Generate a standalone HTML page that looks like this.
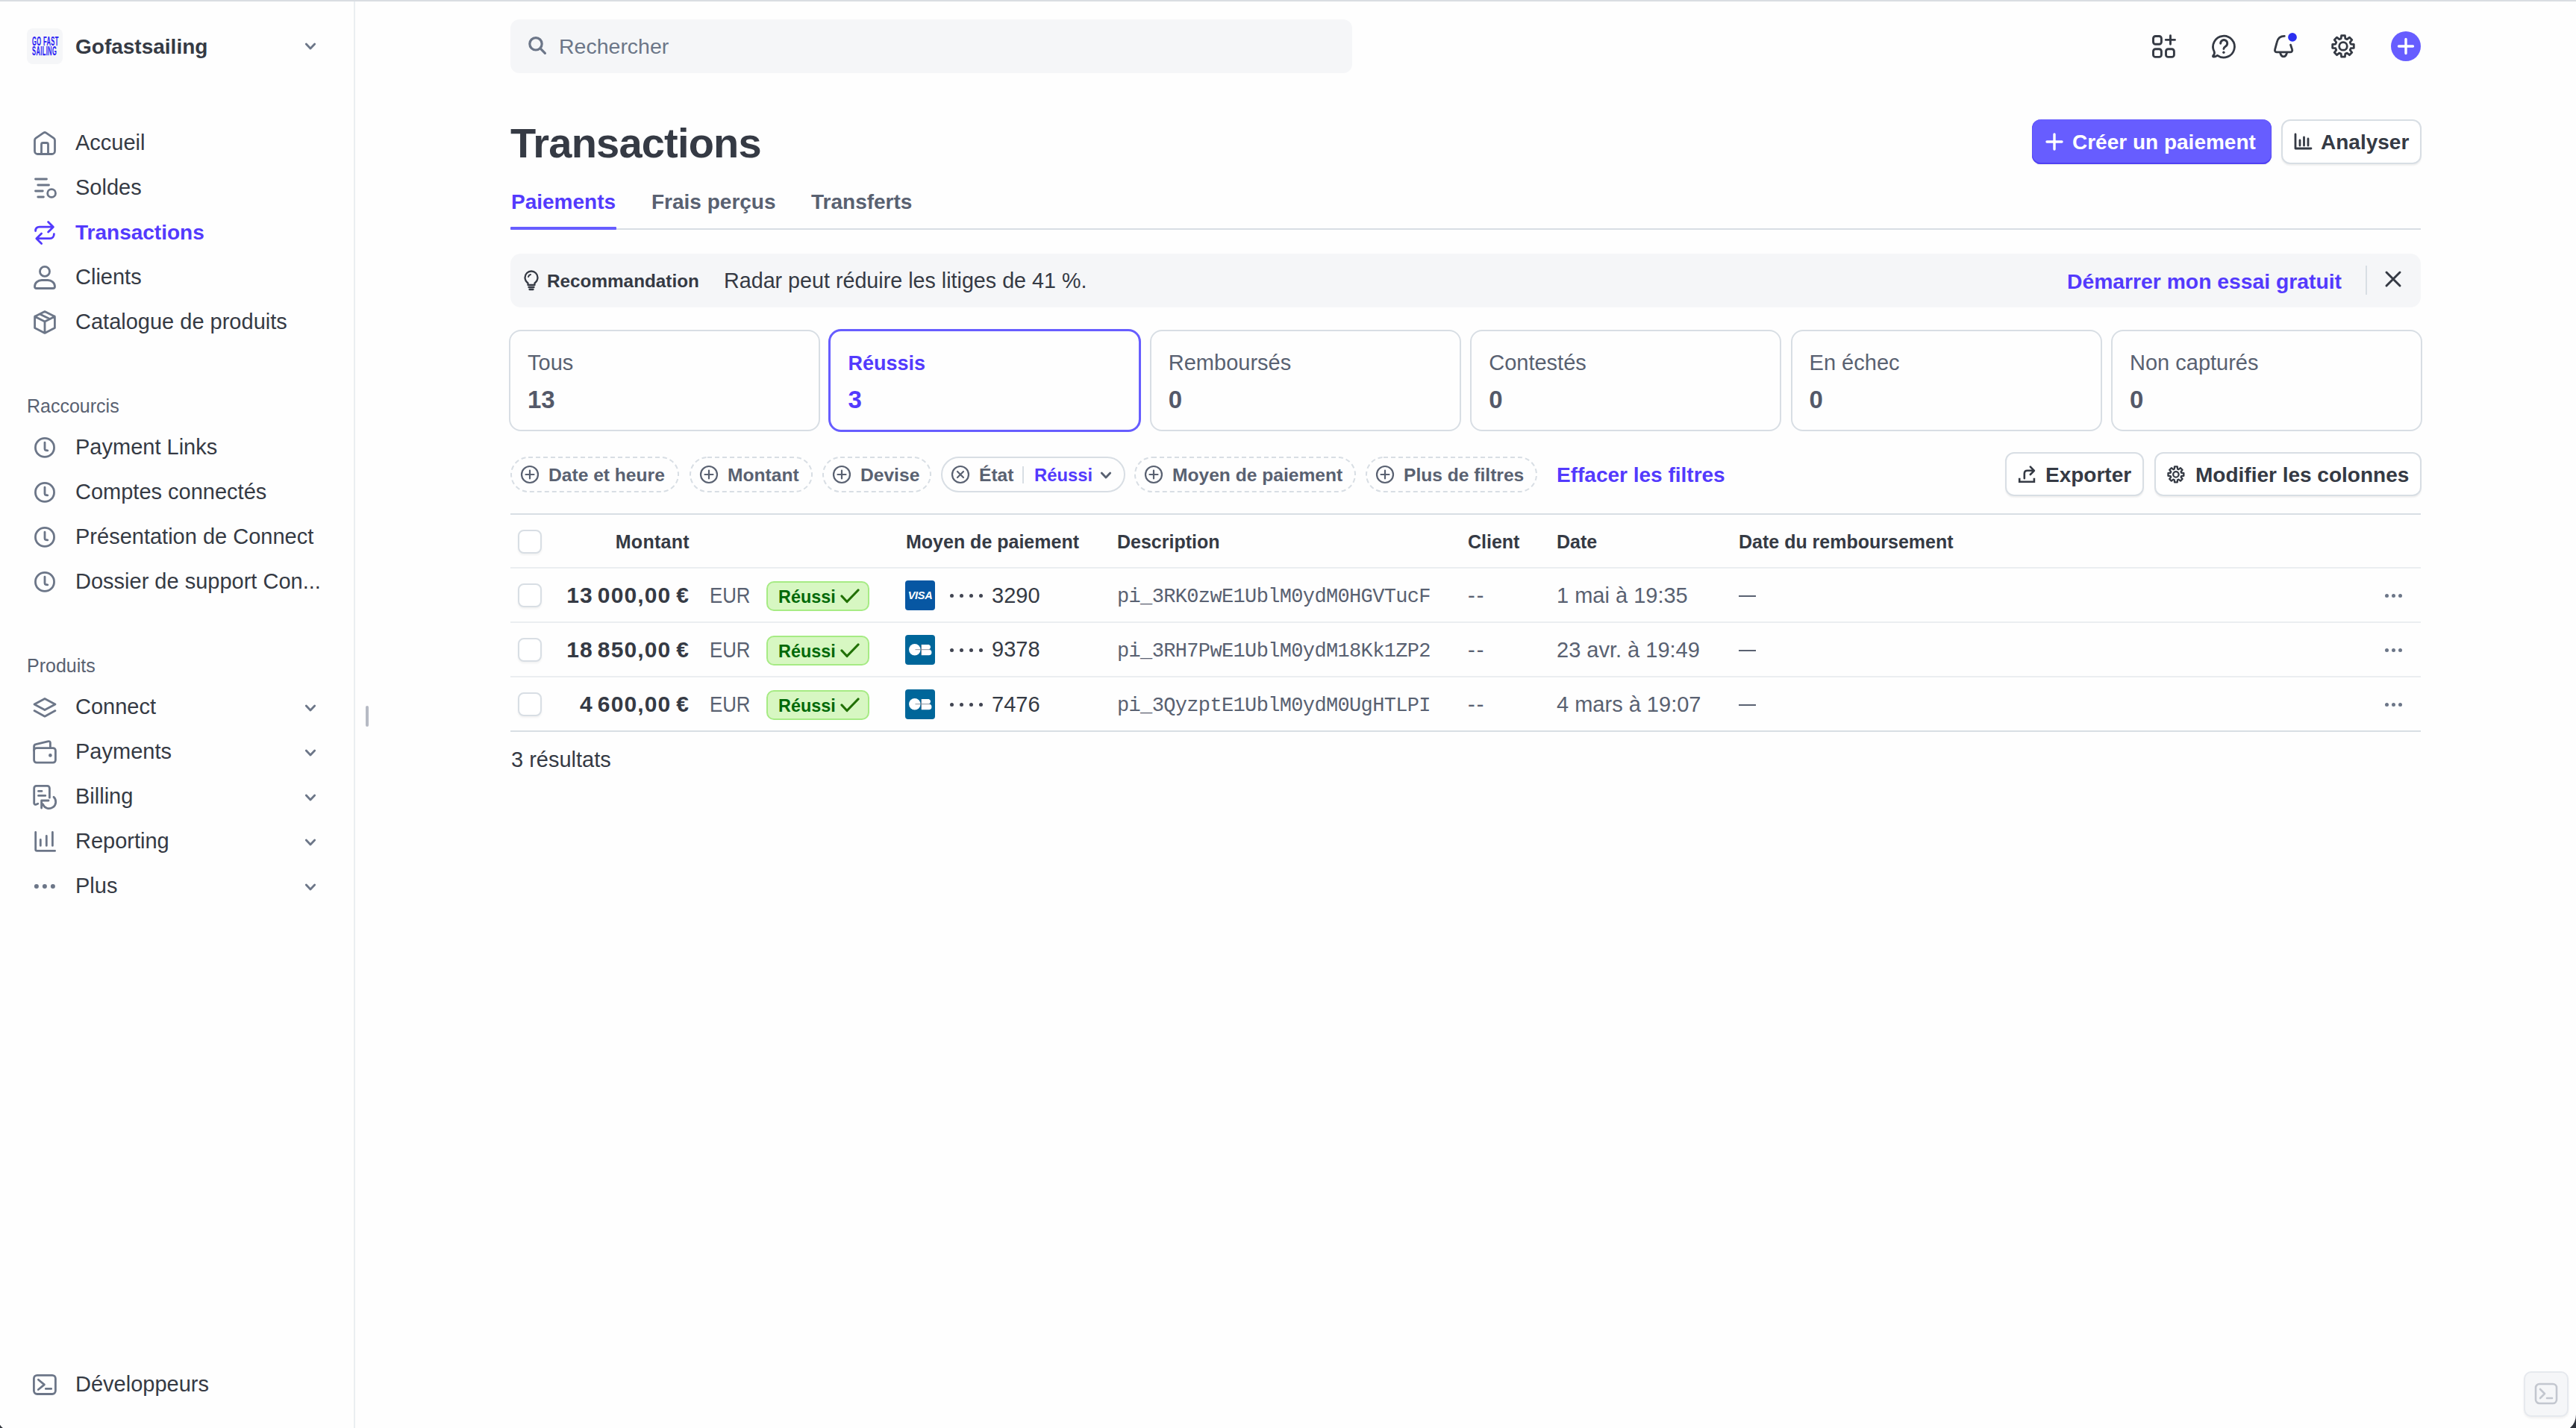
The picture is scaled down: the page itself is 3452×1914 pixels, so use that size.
<!DOCTYPE html>
<html><head><meta charset="utf-8"><title>Transactions</title>
<style>
html,body{margin:0;padding:0;}
body{width:3452px;height:1914px;position:relative;overflow:hidden;background:#fefefe;font-family:'Liberation Sans', sans-serif;-webkit-font-smoothing:antialiased;}
</style></head><body>
<div style="position:absolute;left:0px;top:0px;width:3452px;height:2px;background:#d9dde2;"></div>
<div style="position:absolute;left:474px;top:2px;width:2px;height:1912px;background:#ebeef1;"></div>
<div style="position:absolute;left:490px;top:946px;width:4px;height:28px;background:#b6bac4;border-radius:2px;"></div>
<div style="position:absolute;left:36px;top:38px;width:48px;height:48px;background:#f5f6f8;border-radius:8px;"></div>
<div style="position:absolute;left:43px;top:49.8px;font-family:'Liberation Sans', sans-serif;font-weight:700;font-size:16px;line-height:12.8px;color:#2a1ff5;transform:scaleX(0.47);transform-origin:0 0;white-space:nowrap;letter-spacing:0.8px;-webkit-text-stroke:0.25px #2a1ff5">GO FAST<br>SAILING</div>
<div style="position:absolute;top:49.00px;font-family:'Liberation Sans', sans-serif;font-size:28px;line-height:28px;font-weight:700;color:#353a44;white-space:nowrap;left:101px;">Gofastsailing</div>
<svg style="position:absolute;left:404.2px;top:52.4px" width="24" height="20" viewBox="404.2 52.4 24 20" fill="none"><path d="M410.5 59.449999999999996 L416.2 65.35 L421.9 59.449999999999996" stroke="#6c7688" stroke-width="2.8" stroke-linecap="round" stroke-linejoin="round"/></svg>
<svg style="position:absolute;left:40px;top:170px" width="40" height="42" viewBox="40 170 40 42" fill="none"><path d="M46.5 188 Q46.5 186.3 48 185.2 L58.2 178.1 Q60 176.9 61.8 178.1 L72 185.2 Q73.5 186.3 73.5 188 V202.5 A4 4 0 0 1 69.5 206.5 H50.5 A4 4 0 0 1 46.5 202.5 Z" stroke="#6c7688" stroke-width="2.8" stroke-linecap="round" stroke-linejoin="round"/><path d="M55.5 206.5 V193.5 A2 2 0 0 1 57.5 191.5 H62.5 A2 2 0 0 1 64.5 193.5 V206.5" stroke="#6c7688" stroke-width="2.8" stroke-linecap="round" stroke-linejoin="round"/></svg>
<svg style="position:absolute;left:40px;top:232px" width="40" height="40" viewBox="40 232 40 40" fill="none"><path d="M47.5 240 H62.5 M50.8 248 H65.5 M47.5 256 H57.3 M50.8 264 H58.4" stroke="#6c7688" stroke-width="2.8" stroke-linecap="round" stroke-linejoin="round"/><circle cx="69.1" cy="259" r="5.4" stroke="#6c7688" stroke-width="2.8"/></svg>
<svg style="position:absolute;left:40px;top:292px" width="40" height="40" viewBox="40 292 40 40" fill="none"><path d="M47.6 309.6 C47.6 306.2 49.6 304.2 53 304.2 H71 M64.6 297.4 L71.4 304.2 L64.6 311" stroke="#533afd" stroke-width="2.8" stroke-linecap="round" stroke-linejoin="round"/><path d="M72.4 313.6 C72.4 317 70.4 319.7 67 319.7 H49 M55.6 313 L48.8 319.7 L55.6 326.4" stroke="#533afd" stroke-width="2.8" stroke-linecap="round" stroke-linejoin="round"/></svg>
<svg style="position:absolute;left:40px;top:352px" width="40" height="40" viewBox="40 352 40 40" fill="none"><circle cx="60" cy="363.9" r="6.5" stroke="#6c7688" stroke-width="2.8"/><path d="M46.5 384 C46.5 379 51 375.5 56 375.5 H64 C69 375.5 73.5 379 73.5 384 A2.5 2.5 0 0 1 71 386.5 H49 A2.5 2.5 0 0 1 46.5 384 Z" stroke="#6c7688" stroke-width="2.8" stroke-linecap="round" stroke-linejoin="round"/></svg>
<svg style="position:absolute;left:40px;top:412px" width="40" height="40" viewBox="40 412 40 40" fill="none"><path d="M60 417.6 L73.4 424.2 V439.6 L60 446.4 L46.6 439.6 V424.2 Z M46.6 424.2 L60 431 L73.4 424.2 M60 431 V446.4 M53.3 420.9 L66.7 427.6" stroke="#6c7688" stroke-width="2.8" stroke-linecap="round" stroke-linejoin="round"/></svg>
<div style="position:absolute;top:177.00px;font-family:'Liberation Sans', sans-serif;font-size:29px;line-height:29px;font-weight:400;color:#353a44;white-space:nowrap;left:101px;">Accueil</div>
<div style="position:absolute;top:237.00px;font-family:'Liberation Sans', sans-serif;font-size:29px;line-height:29px;font-weight:400;color:#353a44;white-space:nowrap;left:101px;">Soldes</div>
<div style="position:absolute;top:298.00px;font-family:'Liberation Sans', sans-serif;font-size:28px;line-height:28px;font-weight:700;color:#533afd;white-space:nowrap;left:101px;">Transactions</div>
<div style="position:absolute;top:357.00px;font-family:'Liberation Sans', sans-serif;font-size:29px;line-height:29px;font-weight:400;color:#353a44;white-space:nowrap;left:101px;">Clients</div>
<div style="position:absolute;top:417.00px;font-family:'Liberation Sans', sans-serif;font-size:29px;line-height:29px;font-weight:400;color:#353a44;white-space:nowrap;left:101px;">Catalogue de produits</div>
<div style="position:absolute;top:532.00px;font-family:'Liberation Sans', sans-serif;font-size:25px;line-height:25px;font-weight:400;color:#596171;white-space:nowrap;left:36px;">Raccourcis</div>
<div style="position:absolute;top:585.00px;font-family:'Liberation Sans', sans-serif;font-size:29px;line-height:29px;font-weight:400;color:#353a44;white-space:nowrap;left:101px;">Payment Links</div>
<svg style="position:absolute;left:40px;top:579px" width="40" height="40" viewBox="40 579 40 40" fill="none"><circle cx="60" cy="599.9" r="12.55" stroke="#6c7688" stroke-width="2.8"/><path d="M60 593.1 V601.6999999999999 Q60 603.1 61.3 603.5 L63.8 603.8" stroke="#6c7688" stroke-width="2.8" stroke-linecap="round" stroke-linejoin="round"/></svg>
<div style="position:absolute;top:645.00px;font-family:'Liberation Sans', sans-serif;font-size:29px;line-height:29px;font-weight:400;color:#353a44;white-space:nowrap;left:101px;">Comptes connectés</div>
<svg style="position:absolute;left:40px;top:639px" width="40" height="40" viewBox="40 639 40 40" fill="none"><circle cx="60" cy="659.9" r="12.55" stroke="#6c7688" stroke-width="2.8"/><path d="M60 653.1 V661.6999999999999 Q60 663.1 61.3 663.5 L63.8 663.8" stroke="#6c7688" stroke-width="2.8" stroke-linecap="round" stroke-linejoin="round"/></svg>
<div style="position:absolute;top:705.00px;font-family:'Liberation Sans', sans-serif;font-size:29px;line-height:29px;font-weight:400;color:#353a44;white-space:nowrap;left:101px;">Présentation de Connect</div>
<svg style="position:absolute;left:40px;top:699px" width="40" height="40" viewBox="40 699 40 40" fill="none"><circle cx="60" cy="719.9" r="12.55" stroke="#6c7688" stroke-width="2.8"/><path d="M60 713.1 V721.6999999999999 Q60 723.1 61.3 723.5 L63.8 723.8" stroke="#6c7688" stroke-width="2.8" stroke-linecap="round" stroke-linejoin="round"/></svg>
<div style="position:absolute;top:765.00px;font-family:'Liberation Sans', sans-serif;font-size:29px;line-height:29px;font-weight:400;color:#353a44;white-space:nowrap;left:101px;">Dossier de support Con...</div>
<svg style="position:absolute;left:40px;top:759px" width="40" height="40" viewBox="40 759 40 40" fill="none"><circle cx="60" cy="779.9" r="12.55" stroke="#6c7688" stroke-width="2.8"/><path d="M60 773.1 V781.6999999999999 Q60 783.1 61.3 783.5 L63.8 783.8" stroke="#6c7688" stroke-width="2.8" stroke-linecap="round" stroke-linejoin="round"/></svg>
<div style="position:absolute;top:880.00px;font-family:'Liberation Sans', sans-serif;font-size:25px;line-height:25px;font-weight:400;color:#596171;white-space:nowrap;left:36px;">Produits</div>
<div style="position:absolute;top:933.00px;font-family:'Liberation Sans', sans-serif;font-size:29px;line-height:29px;font-weight:400;color:#353a44;white-space:nowrap;left:101px;">Connect</div>
<svg style="position:absolute;left:404.2px;top:938.7px" width="24" height="20" viewBox="404.2 938.7 24 20" fill="none"><path d="M410.5 945.75 L416.2 951.6500000000001 L421.9 945.75" stroke="#6c7688" stroke-width="2.8" stroke-linecap="round" stroke-linejoin="round"/></svg>
<div style="position:absolute;top:993.00px;font-family:'Liberation Sans', sans-serif;font-size:29px;line-height:29px;font-weight:400;color:#353a44;white-space:nowrap;left:101px;">Payments</div>
<svg style="position:absolute;left:404.2px;top:998.7px" width="24" height="20" viewBox="404.2 998.7 24 20" fill="none"><path d="M410.5 1005.75 L416.2 1011.6500000000001 L421.9 1005.75" stroke="#6c7688" stroke-width="2.8" stroke-linecap="round" stroke-linejoin="round"/></svg>
<div style="position:absolute;top:1053.00px;font-family:'Liberation Sans', sans-serif;font-size:29px;line-height:29px;font-weight:400;color:#353a44;white-space:nowrap;left:101px;">Billing</div>
<svg style="position:absolute;left:404.2px;top:1058.7px" width="24" height="20" viewBox="404.2 1058.7 24 20" fill="none"><path d="M410.5 1065.75 L416.2 1071.65 L421.9 1065.75" stroke="#6c7688" stroke-width="2.8" stroke-linecap="round" stroke-linejoin="round"/></svg>
<div style="position:absolute;top:1113.00px;font-family:'Liberation Sans', sans-serif;font-size:29px;line-height:29px;font-weight:400;color:#353a44;white-space:nowrap;left:101px;">Reporting</div>
<svg style="position:absolute;left:404.2px;top:1118.7px" width="24" height="20" viewBox="404.2 1118.7 24 20" fill="none"><path d="M410.5 1125.75 L416.2 1131.65 L421.9 1125.75" stroke="#6c7688" stroke-width="2.8" stroke-linecap="round" stroke-linejoin="round"/></svg>
<div style="position:absolute;top:1173.00px;font-family:'Liberation Sans', sans-serif;font-size:29px;line-height:29px;font-weight:400;color:#353a44;white-space:nowrap;left:101px;">Plus</div>
<svg style="position:absolute;left:404.2px;top:1178.7px" width="24" height="20" viewBox="404.2 1178.7 24 20" fill="none"><path d="M410.5 1185.75 L416.2 1191.65 L421.9 1185.75" stroke="#6c7688" stroke-width="2.8" stroke-linecap="round" stroke-linejoin="round"/></svg>
<svg style="position:absolute;left:40px;top:928px" width="40" height="40" viewBox="40 928 40 40" fill="none"><path d="M60 936.5 L74 944 L60 951.5 L46 944 Z M46 952.6 L60 960.2 L74 952.6" stroke="#6c7688" stroke-width="2.8" stroke-linecap="round" stroke-linejoin="round"/></svg>
<svg style="position:absolute;left:40px;top:988px" width="40" height="40" viewBox="40 988 40 40" fill="none"><path d="M45.6 1006 V1000.6 A3 3 0 0 1 48 997.7 L64.8 993.7 A2 2 0 0 1 67.4 995.6 V1002.6" stroke="#6c7688" stroke-width="2.8" stroke-linecap="round" stroke-linejoin="round"/><path d="M49 1002.6 H71 A3.4 3.4 0 0 1 74.4 1006 V1018.8 A3.4 3.4 0 0 1 71 1022.2 H49 A3.4 3.4 0 0 1 45.6 1018.8 V1006 A3.4 3.4 0 0 1 49 1002.6 Z" stroke="#6c7688" stroke-width="2.8" stroke-linecap="round" stroke-linejoin="round"/><circle cx="67.4" cy="1012.4" r="2.3" fill="#6c7688"/></svg>
<svg style="position:absolute;left:40px;top:1048px" width="40" height="40" viewBox="40 1048 40 40" fill="none"><path d="M66.4 1069.2 V1056.4 A3 3 0 0 0 63.4 1053.4 H48.7 A3 3 0 0 0 45.7 1056.4 V1076.4 A2 2 0 0 0 48.4 1078.3 L50.8 1077.3" stroke="#6c7688" stroke-width="2.8" stroke-linecap="round" stroke-linejoin="round"/><path d="M51.5 1060.4 H56 M51.5 1066.4 H60.8" stroke="#6c7688" stroke-width="2.8" stroke-linecap="round" stroke-linejoin="round"/><path d="M72 1068.2 A9 9 0 1 1 57.3 1077.8" stroke="#6c7688" stroke-width="2.8" stroke-linecap="round" stroke-linejoin="round"/><path d="M65 1073 H55.6 V1083" stroke="#6c7688" stroke-width="2.8" stroke-linecap="round" stroke-linejoin="round"/></svg>
<svg style="position:absolute;left:40px;top:1108px" width="40" height="40" viewBox="40 1108 40 40" fill="none"><path d="M47.7 1115.4 V1138.6 A1.8 1.8 0 0 0 49.5 1140.4 H73.6 M54.3 1125.4 V1133.4 M62.3 1120.4 V1133.4 M70.4 1115.4 V1133.4" stroke="#6c7688" stroke-width="2.8" stroke-linecap="round" stroke-linejoin="round"/></svg>
<svg style="position:absolute;left:40px;top:1178px" width="40" height="20" viewBox="40 1178 40 20" fill="none"><circle cx="48.9" cy="1188" r="3" fill="#6c7688"/><circle cx="59.9" cy="1188" r="3" fill="#6c7688"/><circle cx="70.9" cy="1188" r="3" fill="#6c7688"/></svg>
<div style="position:absolute;top:1841.00px;font-family:'Liberation Sans', sans-serif;font-size:29px;line-height:29px;font-weight:400;color:#353a44;white-space:nowrap;left:101px;">Développeurs</div>
<svg style="position:absolute;left:40px;top:1836px" width="40" height="40" viewBox="40 1836 40 40" fill="none"><path d="M49.8 1843.3 H70 A4.4 4.4 0 0 1 74.4 1847.7 V1864.1 A4.4 4.4 0 0 1 70 1868.5 H49.8 A4.4 4.4 0 0 1 45.4 1864.1 V1847.7 A4.4 4.4 0 0 1 49.8 1843.3 Z" stroke="#6c7688" stroke-width="2.8" stroke-linecap="round" stroke-linejoin="round"/><path d="M51.4 1849.2 L59.4 1855.9 L51.3 1862.5 M61.3 1861.4 H68.7" stroke="#6c7688" stroke-width="2.8" stroke-linecap="round" stroke-linejoin="round"/></svg>
<div style="position:absolute;left:684px;top:26px;width:1128px;height:72px;background:#f5f6f8;border-radius:12px;"></div>
<svg style="position:absolute;left:700px;top:40px" width="40" height="40" viewBox="700 40 40 40" fill="none"><circle cx="718" cy="58.8" r="8.2" stroke="#6c7688" stroke-width="3.2"/><path d="M724.3 65.2 L730.4 71.3" stroke="#6c7688" stroke-width="3.2" stroke-linecap="round" stroke-linejoin="round"/></svg>
<div style="position:absolute;top:48.00px;font-family:'Liberation Sans', sans-serif;font-size:28.5px;line-height:28.5px;font-weight:400;color:#6c7688;white-space:nowrap;left:749px;">Rechercher</div>
<svg style="position:absolute;left:2876px;top:38px" width="50" height="50" viewBox="2876 38 50 50" fill="none"><path d="M2888.5 48.5 H2893.4 A3 3 0 0 1 2896.4 51.5 V56.3 A3 3 0 0 1 2893.4 59.3 H2888.5 A3 3 0 0 1 2885.5 56.3 V51.5 A3 3 0 0 1 2888.5 48.5 Z" stroke="#353a44" stroke-width="2.9" stroke-linecap="round" stroke-linejoin="round"/><path d="M2888.5 65.7 H2893.4 A3 3 0 0 1 2896.4 68.7 V73.4 A3 3 0 0 1 2893.4 76.4 H2888.5 A3 3 0 0 1 2885.5 73.4 V68.7 A3 3 0 0 1 2888.5 65.7 Z" stroke="#353a44" stroke-width="2.9" stroke-linecap="round" stroke-linejoin="round"/><path d="M2905.5 65.7 H2910.4 A3 3 0 0 1 2913.4 68.7 V73.4 A3 3 0 0 1 2910.4 76.4 H2905.5 A3 3 0 0 1 2902.5 73.4 V68.7 A3 3 0 0 1 2905.5 65.7 Z" stroke="#353a44" stroke-width="2.9" stroke-linecap="round" stroke-linejoin="round"/><path d="M2908.5 47.7 V59.3 M2902.3 53.4 H2914.5" stroke="#353a44" stroke-width="2.9" stroke-linecap="round" stroke-linejoin="round"/></svg>
<svg style="position:absolute;left:2956px;top:38px" width="50" height="50" viewBox="2956 38 50 50" fill="none"><path d="M2971.6 74.3 A14.4 14.4 0 1 0 2967.2 69.2 C2967.9 71.2 2967.2 73.2 2965.6 74.8 A0.9 0.9 0 0 0 2966.4 76.2 C2968.3 76.2 2969.8 75.3 2971.6 74.3 Z" stroke="#353a44" stroke-width="2.8" stroke-linecap="round" stroke-linejoin="round"/><path d="M2975.7 58.2 A4.5 4.5 0 1 1 2982.6 61.9 C2981 62.9 2979.9 63.8 2979.9 65.6" stroke="#353a44" stroke-width="2.9" stroke-linecap="round" stroke-linejoin="round"/><circle cx="2979.9" cy="70.2" r="1.7" fill="#353a44"/></svg>
<svg style="position:absolute;left:3036px;top:38px" width="50" height="50" viewBox="3036 38 50 50" fill="none"><path d="M3061.3 48.4 C3055.6 48.4 3052.3 51.8 3051.2 56.6 L3048.6 66.4 A2.6 2.6 0 0 0 3051.1 69.9 H3069.1 A2.6 2.6 0 0 0 3071.6 66.4 L3069.6 60.2" stroke="#353a44" stroke-width="2.8" stroke-linecap="round" stroke-linejoin="round"/><path d="M3055.6 70.6 Q3056.8 75.8 3060.1 75.8 Q3063.4 75.8 3064.6 70.6" stroke="#353a44" stroke-width="2.8" stroke-linecap="round" stroke-linejoin="round"/><circle cx="3072" cy="49.9" r="5.9" fill="#2b2ff0"/></svg>
<svg style="position:absolute;left:3116px;top:38px" width="50" height="50" viewBox="3116 38 50 50" fill="none"><path d="M3137.17 51.69 L3137.61 47.60 L3142.39 47.60 L3142.83 51.69 L3145.22 52.67 L3148.42 50.10 L3151.80 53.48 L3149.23 56.68 L3150.21 59.07 L3154.30 59.51 L3154.30 64.29 L3150.21 64.73 L3149.23 67.12 L3151.80 70.32 L3148.42 73.70 L3145.22 71.13 L3142.83 72.11 L3142.39 76.20 L3137.61 76.20 L3137.17 72.11 L3134.78 71.13 L3131.58 73.70 L3128.20 70.32 L3130.77 67.12 L3129.79 64.73 L3125.70 64.29 L3125.70 59.51 L3129.79 59.07 L3130.77 56.68 L3128.20 53.48 L3131.58 50.10 L3134.78 52.67 Z" stroke="#353a44" stroke-width="2.8" stroke-linecap="round" stroke-linejoin="round"/><circle cx="3140" cy="61.9" r="5.3" stroke="#353a44" stroke-width="2.8"/></svg>
<svg style="position:absolute;left:3200px;top:38px" width="50" height="50" viewBox="3200 38 50 50" fill="none"><circle cx="3224" cy="62" r="20" fill="#675dff"/><path d="M3224 52.5 V71.5 M3214.5 62 H3233.5" stroke="#fff" stroke-width="3.4" stroke-linecap="round" stroke-linejoin="round"/></svg>
<div style="position:absolute;top:164.00px;font-family:'Liberation Sans', sans-serif;font-size:56px;line-height:56px;font-weight:700;color:#353a44;white-space:nowrap;letter-spacing:-0.8px;left:684px;">Transactions</div>
<div style="position:absolute;left:2723px;top:160px;width:321px;height:60px;background:#675dff;border-radius:12px;box-shadow:inset 0 -2px 0 #5040f2, inset 1px 0 0 #5c4ff8, inset -1px 0 0 #5c4ff8, 0 1px 2px rgba(0,0,0,0.08);"></div>
<svg style="position:absolute;left:2741px;top:178px;" width="24" height="24" viewBox="0 0 24 24" fill="none"><path d="M12 2 V22 M2 12 H22" stroke="#fff" stroke-width="3.4" stroke-linecap="round"/></svg>
<div style="position:absolute;top:177.00px;font-family:'Liberation Sans', sans-serif;font-size:28px;line-height:28px;font-weight:700;color:#ffffff;white-space:nowrap;left:2777px;">Créer un paiement</div>
<div style="position:absolute;left:3057px;top:160px;width:188px;height:60px;background:#fff;border:2px solid #d8dee4;border-radius:12px;box-sizing:border-box;box-shadow:0 2px 2px rgba(0,0,0,0.06);"></div>
<svg style="position:absolute;left:3073px;top:178px;" width="26" height="24" viewBox="0 0 26 24" fill="none"><path d="M3 2 V21 H24" stroke="#353a44" stroke-width="2.8" stroke-linecap="round" stroke-linejoin="round"/><path d="M9 10 V17 M14.5 6 V17 M20 8 V17" stroke="#353a44" stroke-width="2.8" stroke-linecap="round"/></svg>
<div style="position:absolute;top:177.00px;font-family:'Liberation Sans', sans-serif;font-size:28px;line-height:28px;font-weight:700;color:#353a44;white-space:nowrap;left:3110px;">Analyser</div>
<div style="position:absolute;left:684px;top:306px;width:2560px;height:2px;background:#d8dee4;"></div>
<div style="position:absolute;top:257.00px;font-family:'Liberation Sans', sans-serif;font-size:28px;line-height:28px;font-weight:700;color:#533afd;white-space:nowrap;left:685px;">Paiements</div>
<div style="position:absolute;left:684px;top:304px;width:142px;height:4px;background:#675dff;border-radius:1px;"></div>
<div style="position:absolute;top:257.00px;font-family:'Liberation Sans', sans-serif;font-size:28px;line-height:28px;font-weight:700;color:#596171;white-space:nowrap;left:873px;">Frais perçus</div>
<div style="position:absolute;top:257.00px;font-family:'Liberation Sans', sans-serif;font-size:28px;line-height:28px;font-weight:700;color:#596171;white-space:nowrap;left:1087px;">Transferts</div>
<div style="position:absolute;left:684px;top:340px;width:2560px;height:72px;background:#f5f6f8;border-radius:14px;"></div>
<svg style="position:absolute;left:700px;top:362px;" width="24" height="28" viewBox="0 0 24 28" fill="none"><path d="M7.5 17.5 C5 15.5 3.5 13 3.5 10 A8.5 8.5 0 0 1 20.5 10 C20.5 13 19 15.5 16.5 17.5 V20 H7.5 Z" stroke="#353a44" stroke-width="2.3" stroke-linejoin="round"/><path d="M8.5 23 H15.5 M9.5 26 H14.5" stroke="#353a44" stroke-width="2.3" stroke-linecap="round"/><path d="M8 9 A4 4 0 0 1 11 6" stroke="#353a44" stroke-width="2" stroke-linecap="round"/></svg>
<div style="position:absolute;top:365.00px;font-family:'Liberation Sans', sans-serif;font-size:24.3px;line-height:24.3px;font-weight:700;color:#353a44;white-space:nowrap;left:733px;">Recommandation</div>
<div style="position:absolute;top:362.00px;font-family:'Liberation Sans', sans-serif;font-size:28.7px;line-height:28.7px;font-weight:400;color:#353a44;white-space:nowrap;left:970px;">Radar peut réduire les litiges de 41 %.</div>
<div style="position:absolute;top:363.00px;font-family:'Liberation Sans', sans-serif;font-size:28.3px;line-height:28.3px;font-weight:700;color:#533afd;white-space:nowrap;left:2770px;">Démarrer mon essai gratuit</div>
<div style="position:absolute;left:3170px;top:356px;width:2px;height:39px;background:#d8dee4;"></div>
<svg style="position:absolute;left:3195px;top:362px;" width="24" height="24" viewBox="0 0 24 24" fill="none"><path d="M3 3 L21 21 M21 3 L3 21" stroke="#353a44" stroke-width="3" stroke-linecap="round"/></svg>
<div style="position:absolute;left:682.0px;top:442px;width:417px;height:136px;border:2px solid #d8dee4;border-radius:16px;box-sizing:border-box;"></div>
<div style="position:absolute;top:472.00px;font-family:'Liberation Sans', sans-serif;font-size:29px;line-height:29px;font-weight:400;color:#596171;white-space:nowrap;left:707.0px;">Tous</div>
<div style="position:absolute;top:519.00px;font-family:'Liberation Sans', sans-serif;font-size:33px;line-height:33px;font-weight:700;color:#545969;white-space:nowrap;left:707.0px;">13</div>
<div style="position:absolute;left:1110.4px;top:441px;width:419px;height:138px;border:3px solid #675dff;border-radius:17px;box-sizing:border-box;"></div>
<div style="position:absolute;top:474.00px;font-family:'Liberation Sans', sans-serif;font-size:27px;line-height:27px;font-weight:700;color:#533afd;white-space:nowrap;left:1136.4px;">Réussis</div>
<div style="position:absolute;top:519.00px;font-family:'Liberation Sans', sans-serif;font-size:33px;line-height:33px;font-weight:700;color:#533afd;white-space:nowrap;left:1136.4px;">3</div>
<div style="position:absolute;left:1540.8px;top:442px;width:417px;height:136px;border:2px solid #d8dee4;border-radius:16px;box-sizing:border-box;"></div>
<div style="position:absolute;top:472.00px;font-family:'Liberation Sans', sans-serif;font-size:29px;line-height:29px;font-weight:400;color:#596171;white-space:nowrap;left:1565.8px;">Remboursés</div>
<div style="position:absolute;top:519.00px;font-family:'Liberation Sans', sans-serif;font-size:33px;line-height:33px;font-weight:700;color:#545969;white-space:nowrap;left:1565.8px;">0</div>
<div style="position:absolute;left:1970.1999999999998px;top:442px;width:417px;height:136px;border:2px solid #d8dee4;border-radius:16px;box-sizing:border-box;"></div>
<div style="position:absolute;top:472.00px;font-family:'Liberation Sans', sans-serif;font-size:29px;line-height:29px;font-weight:400;color:#596171;white-space:nowrap;left:1995.1999999999998px;">Contestés</div>
<div style="position:absolute;top:519.00px;font-family:'Liberation Sans', sans-serif;font-size:33px;line-height:33px;font-weight:700;color:#545969;white-space:nowrap;left:1995.1999999999998px;">0</div>
<div style="position:absolute;left:2399.6px;top:442px;width:417px;height:136px;border:2px solid #d8dee4;border-radius:16px;box-sizing:border-box;"></div>
<div style="position:absolute;top:472.00px;font-family:'Liberation Sans', sans-serif;font-size:29px;line-height:29px;font-weight:400;color:#596171;white-space:nowrap;left:2424.6px;">En échec</div>
<div style="position:absolute;top:519.00px;font-family:'Liberation Sans', sans-serif;font-size:33px;line-height:33px;font-weight:700;color:#545969;white-space:nowrap;left:2424.6px;">0</div>
<div style="position:absolute;left:2829.0px;top:442px;width:417px;height:136px;border:2px solid #d8dee4;border-radius:16px;box-sizing:border-box;"></div>
<div style="position:absolute;top:472.00px;font-family:'Liberation Sans', sans-serif;font-size:29px;line-height:29px;font-weight:400;color:#596171;white-space:nowrap;left:2854.0px;">Non capturés</div>
<div style="position:absolute;top:519.00px;font-family:'Liberation Sans', sans-serif;font-size:33px;line-height:33px;font-weight:700;color:#545969;white-space:nowrap;left:2854.0px;">0</div>
<svg style="position:absolute;left:684px;top:612px;" width="226" height="48" viewBox="0 0 226 48" fill="none"><rect x="1" y="1" width="224" height="46" rx="23" stroke="#d8dee4" stroke-width="2" stroke-dasharray="6 4"/></svg>
<svg style="position:absolute;left:697px;top:623px;" width="26" height="26" viewBox="0 0 26 26" fill="none"><circle cx="13" cy="13" r="11" stroke="#596171" stroke-width="2.2"/><path d="M13 7.5 V18.5 M7.5 13 H18.5" stroke="#596171" stroke-width="2.2" stroke-linecap="round"/></svg>
<div style="position:absolute;top:625.00px;font-family:'Liberation Sans', sans-serif;font-size:24.6px;line-height:24.6px;font-weight:700;color:#596171;white-space:nowrap;left:735px;">Date et heure</div>
<svg style="position:absolute;left:924px;top:612px;" width="165" height="48" viewBox="0 0 165 48" fill="none"><rect x="1" y="1" width="163" height="46" rx="23" stroke="#d8dee4" stroke-width="2" stroke-dasharray="6 4"/></svg>
<svg style="position:absolute;left:937px;top:623px;" width="26" height="26" viewBox="0 0 26 26" fill="none"><circle cx="13" cy="13" r="11" stroke="#596171" stroke-width="2.2"/><path d="M13 7.5 V18.5 M7.5 13 H18.5" stroke="#596171" stroke-width="2.2" stroke-linecap="round"/></svg>
<div style="position:absolute;top:625.00px;font-family:'Liberation Sans', sans-serif;font-size:24.6px;line-height:24.6px;font-weight:700;color:#596171;white-space:nowrap;left:975px;">Montant</div>
<svg style="position:absolute;left:1102px;top:612px;" width="146" height="48" viewBox="0 0 146 48" fill="none"><rect x="1" y="1" width="144" height="46" rx="23" stroke="#d8dee4" stroke-width="2" stroke-dasharray="6 4"/></svg>
<svg style="position:absolute;left:1115px;top:623px;" width="26" height="26" viewBox="0 0 26 26" fill="none"><circle cx="13" cy="13" r="11" stroke="#596171" stroke-width="2.2"/><path d="M13 7.5 V18.5 M7.5 13 H18.5" stroke="#596171" stroke-width="2.2" stroke-linecap="round"/></svg>
<div style="position:absolute;top:625.00px;font-family:'Liberation Sans', sans-serif;font-size:24.6px;line-height:24.6px;font-weight:700;color:#596171;white-space:nowrap;left:1153px;">Devise</div>
<svg style="position:absolute;left:1520px;top:612px;" width="297" height="48" viewBox="0 0 297 48" fill="none"><rect x="1" y="1" width="295" height="46" rx="23" stroke="#d8dee4" stroke-width="2" stroke-dasharray="6 4"/></svg>
<svg style="position:absolute;left:1533px;top:623px;" width="26" height="26" viewBox="0 0 26 26" fill="none"><circle cx="13" cy="13" r="11" stroke="#596171" stroke-width="2.2"/><path d="M13 7.5 V18.5 M7.5 13 H18.5" stroke="#596171" stroke-width="2.2" stroke-linecap="round"/></svg>
<div style="position:absolute;top:625.00px;font-family:'Liberation Sans', sans-serif;font-size:24.6px;line-height:24.6px;font-weight:700;color:#596171;white-space:nowrap;left:1571px;">Moyen de paiement</div>
<svg style="position:absolute;left:1830px;top:612px;" width="230" height="48" viewBox="0 0 230 48" fill="none"><rect x="1" y="1" width="228" height="46" rx="23" stroke="#d8dee4" stroke-width="2" stroke-dasharray="6 4"/></svg>
<svg style="position:absolute;left:1843px;top:623px;" width="26" height="26" viewBox="0 0 26 26" fill="none"><circle cx="13" cy="13" r="11" stroke="#596171" stroke-width="2.2"/><path d="M13 7.5 V18.5 M7.5 13 H18.5" stroke="#596171" stroke-width="2.2" stroke-linecap="round"/></svg>
<div style="position:absolute;top:625.00px;font-family:'Liberation Sans', sans-serif;font-size:24.6px;line-height:24.6px;font-weight:700;color:#596171;white-space:nowrap;left:1881px;">Plus de filtres</div>
<div style="position:absolute;left:1261px;top:612px;width:247px;height:48px;border:2px solid #d8dee4;border-radius:24px;box-sizing:border-box;"></div>
<svg style="position:absolute;left:1274px;top:623px;" width="26" height="26" viewBox="0 0 26 26" fill="none"><circle cx="13" cy="13" r="11" stroke="#596171" stroke-width="2.2"/><path d="M9 9 L17 17 M17 9 L9 17" stroke="#596171" stroke-width="2.2" stroke-linecap="round"/></svg>
<div style="position:absolute;top:625.00px;font-family:'Liberation Sans', sans-serif;font-size:24.6px;line-height:24.6px;font-weight:700;color:#596171;white-space:nowrap;left:1312px;">État</div>
<div style="position:absolute;left:1370px;top:625px;width:2px;height:23px;background:#d8dee4;"></div>
<div style="position:absolute;top:625.00px;font-family:'Liberation Sans', sans-serif;font-size:23.8px;line-height:23.8px;font-weight:700;color:#533afd;white-space:nowrap;left:1386px;">Réussi</div>
<svg style="position:absolute;left:1470px;top:627px" width="24" height="20" viewBox="1470 627 24 20" fill="none"><path d="M1476.3 634.05 L1482 639.95 L1487.7 634.05" stroke="#596171" stroke-width="2.8" stroke-linecap="round" stroke-linejoin="round"/></svg>
<div style="position:absolute;top:623.00px;font-family:'Liberation Sans', sans-serif;font-size:28px;line-height:28px;font-weight:700;color:#533afd;white-space:nowrap;left:2086px;">Effacer les filtres</div>
<div style="position:absolute;left:2687px;top:606px;width:186px;height:59px;background:#fff;border:2px solid #d8dee4;border-radius:12px;box-sizing:border-box;box-shadow:0 2px 2px rgba(0,0,0,0.06);"></div>
<div style="position:absolute;left:2887px;top:606px;width:358px;height:59px;background:#fff;border:2px solid #d8dee4;border-radius:12px;box-sizing:border-box;box-shadow:0 2px 2px rgba(0,0,0,0.06);"></div>
<svg style="position:absolute;left:2698px;top:618px" width="36" height="34" viewBox="2698 618 36 34" fill="none"><path d="M2706.2 640.8 V645.8 H2725.9 V640.8" stroke="#353a44" stroke-width="2.6" stroke-linecap="butt" stroke-linejoin="miter"/><path d="M2712.8 641.2 V634.8 Q2712.8 630.8 2716.8 630.8 H2725 M2720.8 625.6 L2725.9 630.8 L2720.8 636" stroke="#353a44" stroke-width="2.6" stroke-linecap="round" stroke-linejoin="round"/></svg>
<div style="position:absolute;top:623.00px;font-family:'Liberation Sans', sans-serif;font-size:28px;line-height:28px;font-weight:700;color:#353a44;white-space:nowrap;left:2741px;">Exporter</div>
<svg style="position:absolute;left:2898px;top:618px" width="36" height="36" viewBox="2898 618 36 36" fill="none"><path d="M2913.74 628.61 L2914.06 625.46 L2917.74 625.46 L2918.06 628.61 L2919.53 629.22 L2921.98 627.22 L2924.58 629.82 L2922.58 632.27 L2923.19 633.74 L2926.34 634.06 L2926.34 637.74 L2923.19 638.06 L2922.58 639.53 L2924.58 641.98 L2921.98 644.58 L2919.53 642.58 L2918.06 643.19 L2917.74 646.34 L2914.06 646.34 L2913.74 643.19 L2912.27 642.58 L2909.82 644.58 L2907.22 641.98 L2909.22 639.53 L2908.61 638.06 L2905.46 637.74 L2905.46 634.06 L2908.61 633.74 L2909.22 632.27 L2907.22 629.82 L2909.82 627.22 L2912.27 629.22 Z" stroke="#353a44" stroke-width="2.3" stroke-linecap="round" stroke-linejoin="round"/><circle cx="2915.9" cy="635.9" r="3.7" stroke="#353a44" stroke-width="2.3"/></svg>
<div style="position:absolute;top:623.00px;font-family:'Liberation Sans', sans-serif;font-size:28px;line-height:28px;font-weight:700;color:#353a44;white-space:nowrap;left:2942px;">Modifier les colonnes</div>
<div style="position:absolute;left:684px;top:688px;width:2560px;height:2px;background:#d8dee4;"></div>
<div style="position:absolute;left:694px;top:710px;width:32px;height:32px;border:2px solid #d8dee4;border-radius:8px;box-sizing:border-box;background:#fff;box-shadow:0 2px 3px rgba(0,0,0,0.05);"></div>
<div style="position:absolute;top:714.00px;font-family:'Liberation Sans', sans-serif;font-size:25px;line-height:25px;font-weight:700;color:#353a44;white-space:nowrap;letter-spacing:0.3px;right:2528px;text-align:right;">Montant</div>
<div style="position:absolute;top:714.00px;font-family:'Liberation Sans', sans-serif;font-size:25px;line-height:25px;font-weight:700;color:#353a44;white-space:nowrap;left:1214px;">Moyen de paiement</div>
<div style="position:absolute;top:714.00px;font-family:'Liberation Sans', sans-serif;font-size:25px;line-height:25px;font-weight:700;color:#353a44;white-space:nowrap;left:1497px;">Description</div>
<div style="position:absolute;top:714.00px;font-family:'Liberation Sans', sans-serif;font-size:25px;line-height:25px;font-weight:700;color:#353a44;white-space:nowrap;left:1967px;">Client</div>
<div style="position:absolute;top:714.00px;font-family:'Liberation Sans', sans-serif;font-size:25px;line-height:25px;font-weight:700;color:#353a44;white-space:nowrap;left:2086px;">Date</div>
<div style="position:absolute;top:714.00px;font-family:'Liberation Sans', sans-serif;font-size:25px;line-height:25px;font-weight:700;color:#353a44;white-space:nowrap;left:2330px;">Date du remboursement</div>
<div style="position:absolute;left:684px;top:760px;width:2560px;height:2px;background:#ebeef1;"></div>
<div style="position:absolute;left:694px;top:782px;width:32px;height:32px;border:2px solid #d8dee4;border-radius:8px;box-sizing:border-box;background:#fff;box-shadow:0 2px 3px rgba(0,0,0,0.05);"></div>
<div style="position:absolute;top:783.00px;font-family:'Liberation Sans', sans-serif;font-size:30px;line-height:30px;font-weight:700;color:#353a44;white-space:nowrap;letter-spacing:1.1px;right:2528px;text-align:right;">13<span style="display:inline-block;width:6px"></span>000,00<span style="display:inline-block;width:7px"></span>€</div>
<div style="position:absolute;top:784.00px;font-family:'Liberation Sans', sans-serif;font-size:29px;line-height:29px;font-weight:400;color:#596171;white-space:nowrap;left:951px;transform:scaleX(0.89);transform-origin:0 0;">EUR</div>
<div style="position:absolute;left:1027px;top:779px;width:138px;height:40px;background:#d7f7c2;border:2px solid #a6eb84;border-radius:10px;box-sizing:border-box;"></div>
<div style="position:absolute;top:789.00px;font-family:'Liberation Sans', sans-serif;font-size:23.4px;line-height:23.4px;font-weight:700;color:#006908;white-space:nowrap;left:1043px;">Réussi</div>
<svg style="position:absolute;left:1126px;top:788px;" width="26" height="22" viewBox="0 0 26 22" fill="none"><path d="M2 11 L9 18.5 L24 3" stroke="#217005" stroke-width="3.2" stroke-linecap="round" stroke-linejoin="round"/></svg>
<div style="position:absolute;left:1213px;top:778px;width:40px;height:40px;background:#0757a3;border-radius:4px;"></div>
<div style="position:absolute;top:791.00px;font-family:'Liberation Sans', sans-serif;font-size:14.5px;line-height:14.5px;font-weight:700;color:#fff;white-space:nowrap;letter-spacing:-0.3px;left:1233px;font-style:italic;transform:translateX(-50%);">VISA</div>
<div style="position:absolute;left:1273.0px;top:796.0px;width:5px;height:5px;background:#414552;border-radius:50%;"></div>
<div style="position:absolute;left:1286.1px;top:796.0px;width:5px;height:5px;background:#414552;border-radius:50%;"></div>
<div style="position:absolute;left:1299.2px;top:796.0px;width:5px;height:5px;background:#414552;border-radius:50%;"></div>
<div style="position:absolute;left:1312.3px;top:796.0px;width:5px;height:5px;background:#414552;border-radius:50%;"></div>
<div style="position:absolute;top:784.00px;font-family:'Liberation Sans', sans-serif;font-size:29px;line-height:29px;font-weight:400;color:#353a44;white-space:nowrap;left:1329px;">3290</div>
<div style="position:absolute;top:787.00px;font-family:'Liberation Mono', monospace;font-size:27px;line-height:27px;font-weight:400;color:#596171;white-space:nowrap;letter-spacing:-0.65px;left:1497px;">pi_3RK0zwE1UblM0ydM0HGVTucF</div>
<div style="position:absolute;top:784.00px;font-family:'Liberation Sans', sans-serif;font-size:29px;line-height:29px;font-weight:400;color:#596171;white-space:nowrap;letter-spacing:2px;left:1967px;">--</div>
<div style="position:absolute;top:784.00px;font-family:'Liberation Sans', sans-serif;font-size:29px;line-height:29px;font-weight:400;color:#596171;white-space:nowrap;left:2086px;">1 mai à 19:35</div>
<div style="position:absolute;left:2330px;top:798px;width:23px;height:2px;background:#596171;"></div>
<div style="position:absolute;left:3196px;top:795.5px;width:5px;height:5px;background:#6c7688;border-radius:50%;"></div>
<div style="position:absolute;left:3205px;top:795.5px;width:5px;height:5px;background:#6c7688;border-radius:50%;"></div>
<div style="position:absolute;left:3214px;top:795.5px;width:5px;height:5px;background:#6c7688;border-radius:50%;"></div>
<div style="position:absolute;left:684px;top:833px;width:2560px;height:2px;background:#ebeef1;"></div>
<div style="position:absolute;left:694px;top:855px;width:32px;height:32px;border:2px solid #d8dee4;border-radius:8px;box-sizing:border-box;background:#fff;box-shadow:0 2px 3px rgba(0,0,0,0.05);"></div>
<div style="position:absolute;top:856.00px;font-family:'Liberation Sans', sans-serif;font-size:30px;line-height:30px;font-weight:700;color:#353a44;white-space:nowrap;letter-spacing:1.1px;right:2528px;text-align:right;">18<span style="display:inline-block;width:6px"></span>850,00<span style="display:inline-block;width:7px"></span>€</div>
<div style="position:absolute;top:857.00px;font-family:'Liberation Sans', sans-serif;font-size:29px;line-height:29px;font-weight:400;color:#596171;white-space:nowrap;left:951px;transform:scaleX(0.89);transform-origin:0 0;">EUR</div>
<div style="position:absolute;left:1027px;top:852px;width:138px;height:40px;background:#d7f7c2;border:2px solid #a6eb84;border-radius:10px;box-sizing:border-box;"></div>
<div style="position:absolute;top:862.00px;font-family:'Liberation Sans', sans-serif;font-size:23.4px;line-height:23.4px;font-weight:700;color:#006908;white-space:nowrap;left:1043px;">Réussi</div>
<svg style="position:absolute;left:1126px;top:861px;" width="26" height="22" viewBox="0 0 26 22" fill="none"><path d="M2 11 L9 18.5 L24 3" stroke="#217005" stroke-width="3.2" stroke-linecap="round" stroke-linejoin="round"/></svg>
<div style="position:absolute;left:1213px;top:851px;width:40px;height:40px;background:#00669a;border-radius:4px;"></div>
<svg style="position:absolute;left:1213px;top:851px" width="40" height="40" viewBox="1213 851 40 40" fill="none"><circle cx="1225.8" cy="870.7" r="7.7" fill="#fff"/><path d="M1234.8 864 H1244.7 A3.55 3.55 0 0 1 1244.7 870.7 A3.55 3.55 0 0 1 1244.7 878.2 H1234.8 Z" fill="#fff"/><path d="M1226.5 870.7 H1247 M1234.6 864 V878" stroke="#7b8795" stroke-width="0.9" stroke-linecap="butt" stroke-linejoin="round"/></svg>
<div style="position:absolute;left:1273.0px;top:869.0px;width:5px;height:5px;background:#414552;border-radius:50%;"></div>
<div style="position:absolute;left:1286.1px;top:869.0px;width:5px;height:5px;background:#414552;border-radius:50%;"></div>
<div style="position:absolute;left:1299.2px;top:869.0px;width:5px;height:5px;background:#414552;border-radius:50%;"></div>
<div style="position:absolute;left:1312.3px;top:869.0px;width:5px;height:5px;background:#414552;border-radius:50%;"></div>
<div style="position:absolute;top:856.00px;font-family:'Liberation Sans', sans-serif;font-size:29px;line-height:29px;font-weight:400;color:#353a44;white-space:nowrap;left:1329px;">9378</div>
<div style="position:absolute;top:860.00px;font-family:'Liberation Mono', monospace;font-size:27px;line-height:27px;font-weight:400;color:#596171;white-space:nowrap;letter-spacing:-0.65px;left:1497px;">pi_3RH7PwE1UblM0ydM18Kk1ZP2</div>
<div style="position:absolute;top:857.00px;font-family:'Liberation Sans', sans-serif;font-size:29px;line-height:29px;font-weight:400;color:#596171;white-space:nowrap;letter-spacing:2px;left:1967px;">--</div>
<div style="position:absolute;top:857.00px;font-family:'Liberation Sans', sans-serif;font-size:29px;line-height:29px;font-weight:400;color:#596171;white-space:nowrap;left:2086px;">23 avr. à 19:49</div>
<div style="position:absolute;left:2330px;top:871px;width:23px;height:2px;background:#596171;"></div>
<div style="position:absolute;left:3196px;top:868.5px;width:5px;height:5px;background:#6c7688;border-radius:50%;"></div>
<div style="position:absolute;left:3205px;top:868.5px;width:5px;height:5px;background:#6c7688;border-radius:50%;"></div>
<div style="position:absolute;left:3214px;top:868.5px;width:5px;height:5px;background:#6c7688;border-radius:50%;"></div>
<div style="position:absolute;left:684px;top:906px;width:2560px;height:2px;background:#ebeef1;"></div>
<div style="position:absolute;left:694px;top:928px;width:32px;height:32px;border:2px solid #d8dee4;border-radius:8px;box-sizing:border-box;background:#fff;box-shadow:0 2px 3px rgba(0,0,0,0.05);"></div>
<div style="position:absolute;top:929.00px;font-family:'Liberation Sans', sans-serif;font-size:30px;line-height:30px;font-weight:700;color:#353a44;white-space:nowrap;letter-spacing:1.1px;right:2528px;text-align:right;">4<span style="display:inline-block;width:6px"></span>600,00<span style="display:inline-block;width:7px"></span>€</div>
<div style="position:absolute;top:930.00px;font-family:'Liberation Sans', sans-serif;font-size:29px;line-height:29px;font-weight:400;color:#596171;white-space:nowrap;left:951px;transform:scaleX(0.89);transform-origin:0 0;">EUR</div>
<div style="position:absolute;left:1027px;top:925px;width:138px;height:40px;background:#d7f7c2;border:2px solid #a6eb84;border-radius:10px;box-sizing:border-box;"></div>
<div style="position:absolute;top:935.00px;font-family:'Liberation Sans', sans-serif;font-size:23.4px;line-height:23.4px;font-weight:700;color:#006908;white-space:nowrap;left:1043px;">Réussi</div>
<svg style="position:absolute;left:1126px;top:934px;" width="26" height="22" viewBox="0 0 26 22" fill="none"><path d="M2 11 L9 18.5 L24 3" stroke="#217005" stroke-width="3.2" stroke-linecap="round" stroke-linejoin="round"/></svg>
<div style="position:absolute;left:1213px;top:924px;width:40px;height:40px;background:#00669a;border-radius:4px;"></div>
<svg style="position:absolute;left:1213px;top:924px" width="40" height="40" viewBox="1213 924 40 40" fill="none"><circle cx="1225.8" cy="943.7" r="7.7" fill="#fff"/><path d="M1234.8 937 H1244.7 A3.55 3.55 0 0 1 1244.7 943.7 A3.55 3.55 0 0 1 1244.7 951.2 H1234.8 Z" fill="#fff"/><path d="M1226.5 943.7 H1247 M1234.6 937 V951" stroke="#7b8795" stroke-width="0.9" stroke-linecap="butt" stroke-linejoin="round"/></svg>
<div style="position:absolute;left:1273.0px;top:942.0px;width:5px;height:5px;background:#414552;border-radius:50%;"></div>
<div style="position:absolute;left:1286.1px;top:942.0px;width:5px;height:5px;background:#414552;border-radius:50%;"></div>
<div style="position:absolute;left:1299.2px;top:942.0px;width:5px;height:5px;background:#414552;border-radius:50%;"></div>
<div style="position:absolute;left:1312.3px;top:942.0px;width:5px;height:5px;background:#414552;border-radius:50%;"></div>
<div style="position:absolute;top:930.00px;font-family:'Liberation Sans', sans-serif;font-size:29px;line-height:29px;font-weight:400;color:#353a44;white-space:nowrap;left:1329px;">7476</div>
<div style="position:absolute;top:933.00px;font-family:'Liberation Mono', monospace;font-size:27px;line-height:27px;font-weight:400;color:#596171;white-space:nowrap;letter-spacing:-0.65px;left:1497px;">pi_3QyzptE1UblM0ydM0UgHTLPI</div>
<div style="position:absolute;top:930.00px;font-family:'Liberation Sans', sans-serif;font-size:29px;line-height:29px;font-weight:400;color:#596171;white-space:nowrap;letter-spacing:2px;left:1967px;">--</div>
<div style="position:absolute;top:930.00px;font-family:'Liberation Sans', sans-serif;font-size:29px;line-height:29px;font-weight:400;color:#596171;white-space:nowrap;left:2086px;">4 mars à 19:07</div>
<div style="position:absolute;left:2330px;top:944px;width:23px;height:2px;background:#596171;"></div>
<div style="position:absolute;left:3196px;top:941.5px;width:5px;height:5px;background:#6c7688;border-radius:50%;"></div>
<div style="position:absolute;left:3205px;top:941.5px;width:5px;height:5px;background:#6c7688;border-radius:50%;"></div>
<div style="position:absolute;left:3214px;top:941.5px;width:5px;height:5px;background:#6c7688;border-radius:50%;"></div>
<div style="position:absolute;left:684px;top:979px;width:2560px;height:2px;background:#d8dee4;"></div>
<div style="position:absolute;top:1004.00px;font-family:'Liberation Sans', sans-serif;font-size:29px;line-height:29px;font-weight:400;color:#353a44;white-space:nowrap;left:685px;">3 résultats</div>
<div style="position:absolute;left:3382px;top:1838px;width:60px;height:61px;background:#f5f6f8;border:2px solid #e6e9ee;border-radius:10px;box-sizing:border-box;box-shadow:0 2px 3px rgba(0,0,0,0.06);"></div>
<svg style="position:absolute;left:3396px;top:1853px;" width="32" height="30" viewBox="0 0 32 30" fill="none"><rect x="2" y="2" width="28" height="26" rx="5" stroke="#c3c7cf" stroke-width="2.6"/><path d="M8 9 L14 15 L8 21 M17 21 H24" stroke="#c3c7cf" stroke-width="2.6" stroke-linecap="round" stroke-linejoin="round"/></svg>
<svg style="position:absolute;left:0px;top:1904px" width="10" height="10" viewBox="0 1904 10 10" fill="none"><path d="M0 1909.8 Q1.6 1912.6 3.9 1914 H0 Z" fill="#30343d"/></svg>
<svg style="position:absolute;left:3436px;top:1890px" width="16" height="24" viewBox="3436 1890 16 24" fill="none"><path d="M3452 1895.9 V1914 H3443.96 A24.4 24.4 0 0 0 3452 1895.9 Z" fill="#30343d"/></svg>
</body></html>
